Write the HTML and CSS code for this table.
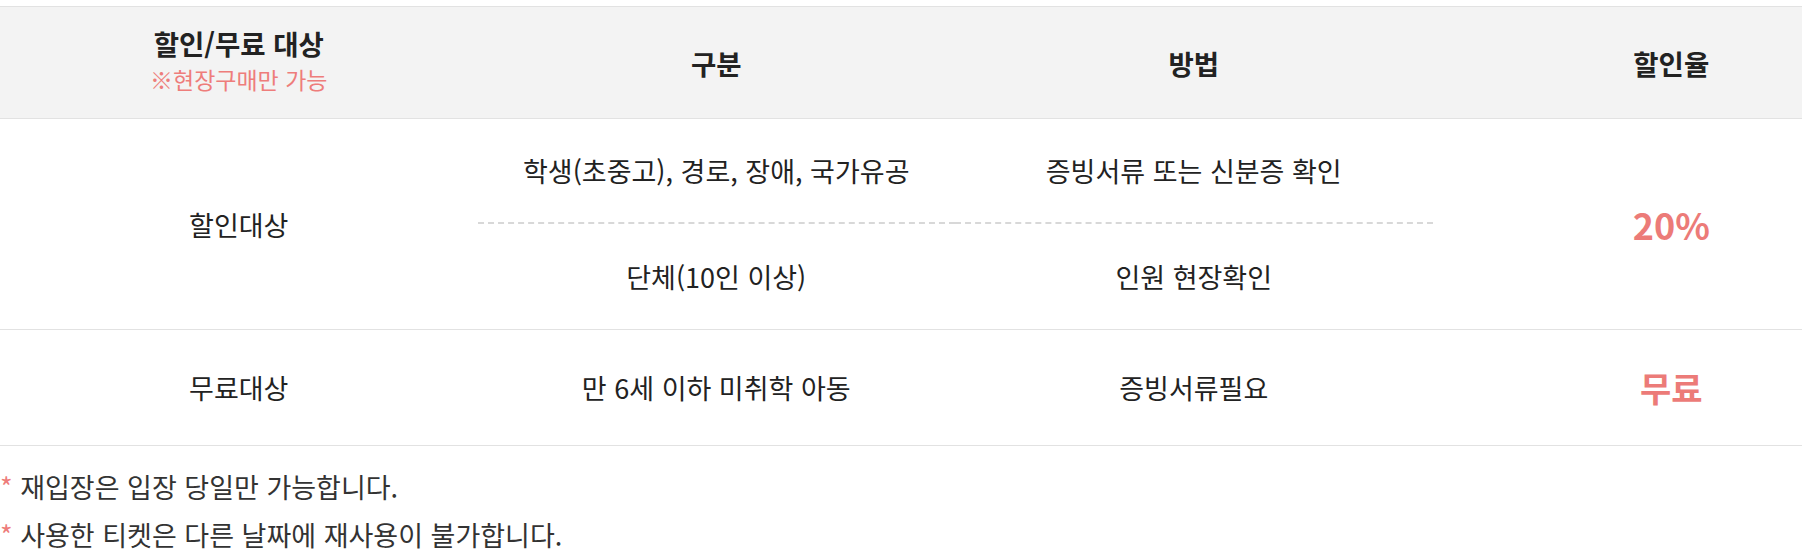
FILE: index.html
```html
<!DOCTYPE html>
<html lang="ko">
<head>
<meta charset="utf-8">
<link rel="stylesheet" href="styles.css">
</head>
<body>
<div class="page">
  <div class="price-table">
    <div class="cell head head-first"><strong>할인/무료 대상</strong><span class="sub">※현장구매만 가능</span></div>
    <div class="cell head"><strong>구분</strong></div>
    <div class="cell head"><strong>방법</strong></div>
    <div class="cell head"><strong>할인율</strong></div>

    <div class="cell span2 row-end">할인대상</div>
    <div class="cell sub-top">학생(초중고), 경로, 장애, 국가유공</div>
    <div class="cell sub-top">증빙서류 또는 신분증 확인</div>
    <div class="cell span2 row-end rate">20%</div>
    <div class="cell sub-bottom row-end">단체(10인 이상)</div>
    <div class="cell sub-bottom row-end">인원 현장확인</div>

    <div class="cell row2 row-end">무료대상</div>
    <div class="cell row2 row-end">만 6세 이하 미취학 아동</div>
    <div class="cell row2 row-end">증빙서류필요</div>
    <div class="cell row2 row-end rate free">무료</div>
  </div>
  <ul class="notes">
    <li><span class="star">*</span> 재입장은 입장 당일만 가능합니다.</li>
    <li><span class="star">*</span> 사용한 티켓은 다른 날짜에 재사용이 불가합니다.</li>
  </ul>
</div>
</body>
</html>
```

FILE: styles.css
```css
html, body {
  margin: 0;
  padding: 0;
  background: #fff;
  overflow: hidden;
}
body {
  font-family: "Noto Sans CJK KR", "Noto Sans", sans-serif;
  color: #222;
}
.page {
  padding-top: 6px;
  width: 1910px;
}
.price-table {
  display: grid;
  grid-template-columns: repeat(4, 1fr);
  border-top: 1px solid #e2e2e2;
}
.cell {
  box-sizing: border-box;
  display: flex;
  flex-direction: column;
  align-items: center;
  justify-content: center;
  text-align: center;
  font-size: 27px;
}
.head {
  height: 112px;
  background: #f3f3f3;
  border-bottom: 1px solid #e2e2e2;
  line-height: 36px;
}
.head-first {
  padding-bottom: 4px;
}
.head strong {
  font-weight: 700;
  font-size: 27.5px;
}
.head .sub {
  color: #ee7d7b;
  font-size: 23px;
  font-weight: 400;
}
.span2 {
  grid-row: span 2;
}
.row-end {
  border-bottom: 1px solid #e2e2e2;
}
.sub-top {
  height: 105px;
  border-bottom: 2px dashed #d8d8d8;
}
.sub-bottom {
  height: 106px;
}
.row2 {
  height: 116px;
}
.rate {
  color: #ec7b78;
  font-weight: 700;
  font-size: 36px;
}
.rate.free {
  font-size: 34px;
}
.notes {
  list-style: none;
  margin: 0;
  padding: 17px 0 0;
  font-size: 27px;
  line-height: 48px;
  color: #333;
}
.star {
  color: #ee7d7b;
}
```
